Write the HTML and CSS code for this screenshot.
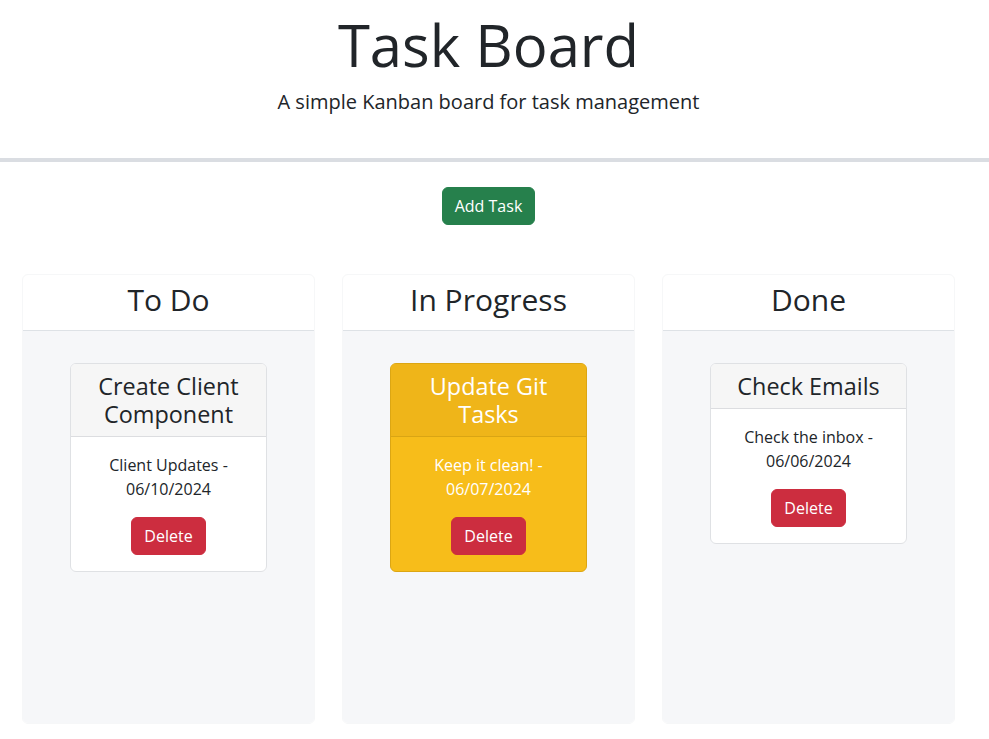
FILE: index.html
```html
<!DOCTYPE html>
<html lang="en">
<head>
<meta charset="utf-8">
<title>Task Board</title>
<link rel="stylesheet" href="styles.css">
</head>
<body>
<header class="hero">
  <h1 class="hero-title">Task Board</h1>
  <p class="hero-lead">A simple Kanban board for task management</p>
</header>
<main class="main">
  <div class="actions">
    <button class="btn btn-success" type="button">Add Task</button>
  </div>
  <div class="board">
    <section class="lane">
      <div class="lane-header"><h2 class="lane-title">To Do</h2></div>
      <div class="lane-body">
        <article class="task">
          <div class="task-header"><h4 class="task-title">Create Client Component</h4></div>
          <div class="task-body">
            <p class="task-text">Client Updates - 06/10/2024</p>
            <button class="btn btn-danger" type="button">Delete</button>
          </div>
        </article>
      </div>
    </section>
    <section class="lane">
      <div class="lane-header"><h2 class="lane-title">In Progress</h2></div>
      <div class="lane-body">
        <article class="task task-warning">
          <div class="task-header"><h4 class="task-title">Update Git Tasks</h4></div>
          <div class="task-body">
            <p class="task-text">Keep it clean! - 06/07/2024</p>
            <button class="btn btn-danger" type="button">Delete</button>
          </div>
        </article>
      </div>
    </section>
    <section class="lane">
      <div class="lane-header"><h2 class="lane-title">Done</h2></div>
      <div class="lane-body">
        <article class="task">
          <div class="task-header"><h4 class="task-title">Check Emails</h4></div>
          <div class="task-body">
            <p class="task-text">Check the inbox - 06/06/2024</p>
            <button class="btn btn-danger" type="button">Delete</button>
          </div>
        </article>
      </div>
    </section>
  </div>
</main>
</body>
</html>
```
FILE: styles.css
```css
* { box-sizing: border-box; }
html, body { margin: 0; padding: 0; }
body {
  font-family: "Open Sans", "Noto Sans", sans-serif;
  font-size: 16px;
  line-height: 1.5;
  color: #212529;
  background: #ffffff;
}
.hero {
  text-align: center;
  padding: 10px 28px 0 16px;
  height: 162px;
  border-bottom: 4px solid #dadde2;
}
.hero-title {
  margin: 0 0 7px;
  font-size: 58px;
  font-weight: 400;
  line-height: 70px;
}
.hero-lead {
  margin: 0;
  font-size: 20px;
  font-weight: 400;
  line-height: 1.5;
}
.main { padding-top: 25px; }
.actions {
  display: flex;
  justify-content: center;
  padding-right: 12px;
}
.btn {
  font-family: inherit;
  font-size: 16px;
  line-height: 24px;
  padding: 6px 12px;
  border: 1px solid transparent;
  border-radius: 6px;
  color: #ffffff;
  cursor: pointer;
}
.btn-success { background: #26804c; border-color: #26804c; }
.btn-danger { background: #cc2d3f; border-color: #cc2d3f; }
.board {
  display: flex;
  gap: 27px;
  padding-left: 22px;
  margin-top: 49px;
}
.lane {
  width: 293px;
  border: 1px solid #f6f7f8;
  border-radius: 6px;
  overflow: hidden;
  background: #ffffff;
}
.lane-header {
  padding: 7px 16px 12px;
  border-bottom: 1px solid #dee2e6;
  text-align: center;
}
.lane-title {
  margin: 0;
  font-size: 30px;
  font-weight: 400;
  line-height: 36px;
}
.lane-body {
  background: #f6f7f9;
  min-height: 392px;
  padding-top: 32px;
  display: flex;
  flex-direction: column;
  align-items: center;
}
.task {
  width: 197px;
  border: 1px solid #dfe1e4;
  border-radius: 6px;
  background: #ffffff;
  overflow: hidden;
  text-align: center;
}
.task-header {
  padding: 8px 16px;
  background: #f6f6f6;
  border-bottom: 1px solid #dcdde0;
}
.task-title {
  margin: 0;
  font-size: 23.4px;
  font-weight: 400;
  line-height: 28px;
}
.task-body { padding: 16px; }
.task-text { margin: 0 0 16px; }
.task-warning {
  background: #f7bd1a;
  border-color: #dca613;
  color: #ffffff;
}
.task-warning .task-header {
  background: #efb519;
  border-bottom-color: #d9a514;
}
```
